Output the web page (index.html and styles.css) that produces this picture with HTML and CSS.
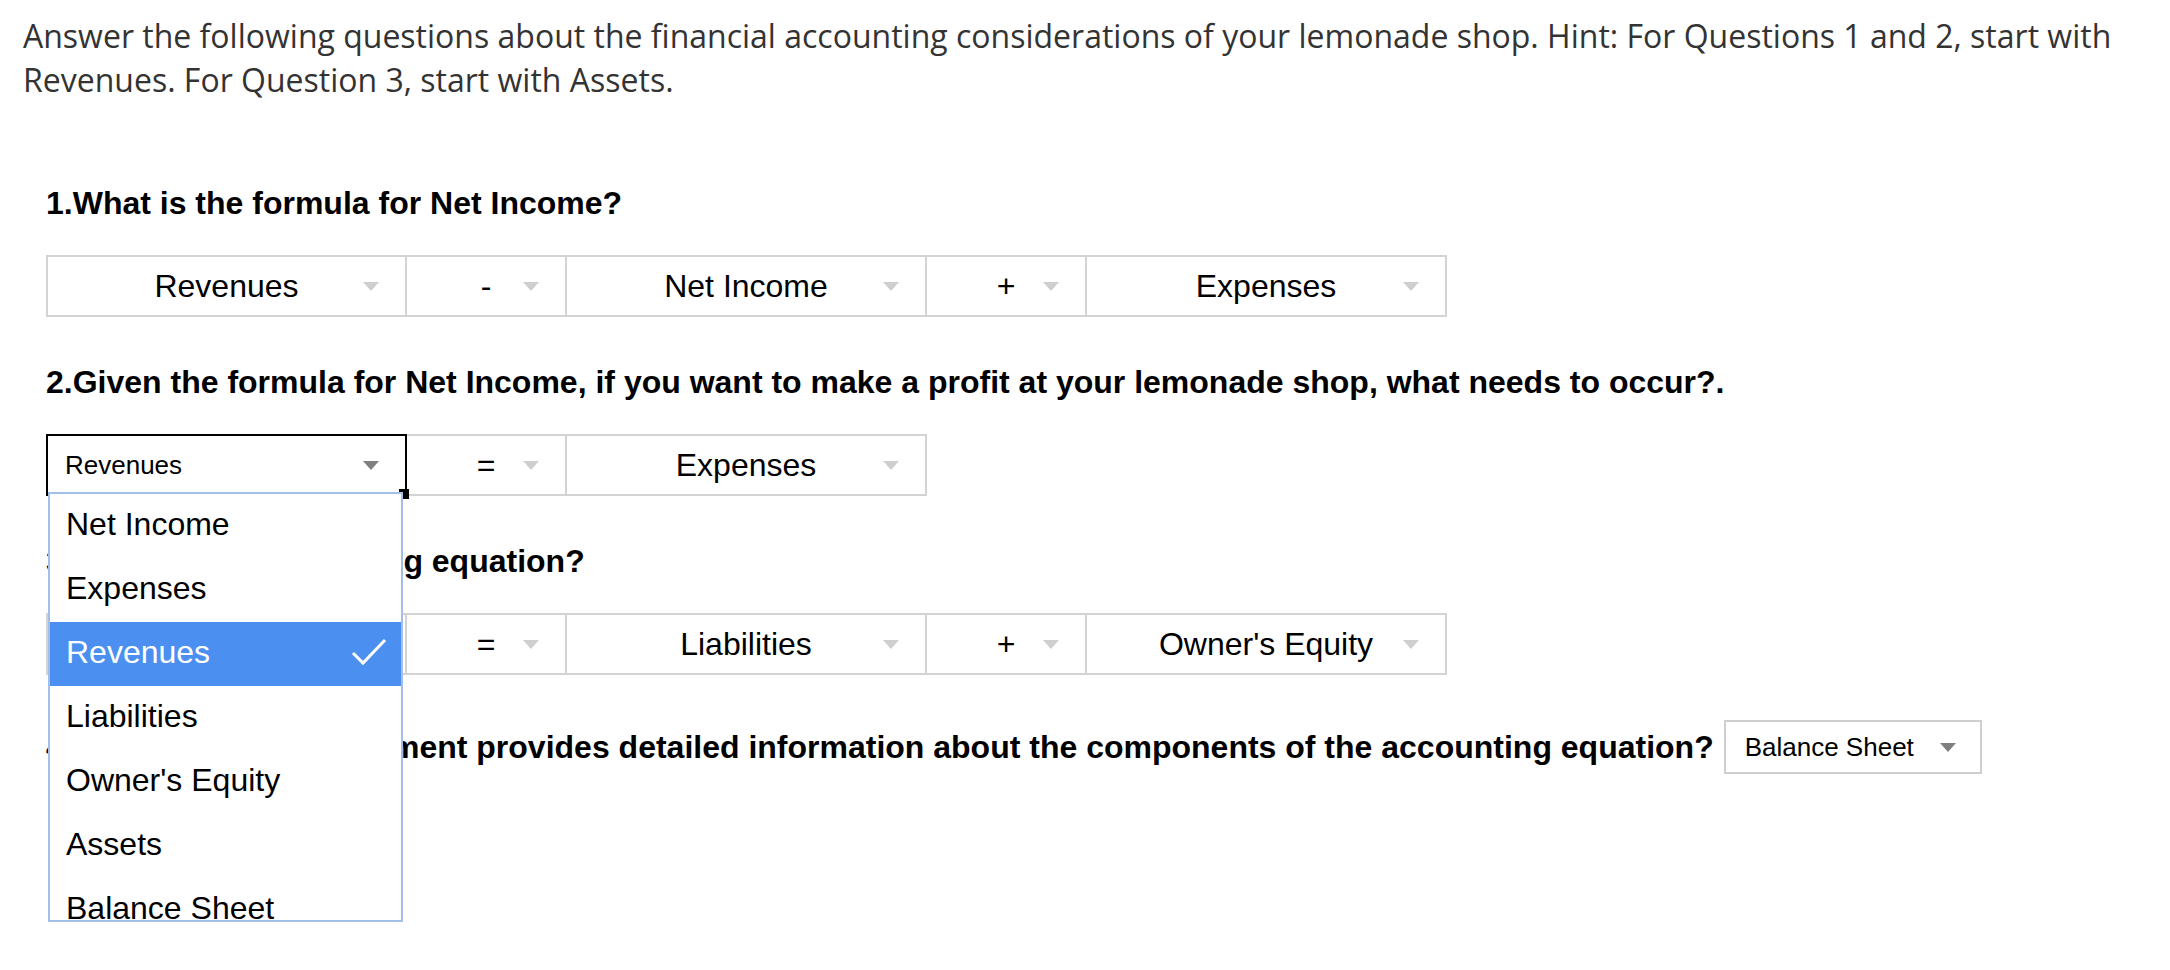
FILE: index.html
```html
<!DOCTYPE html>
<html>
<head>
<meta charset="utf-8">
<title>Lemonade shop accounting</title>
<link rel="stylesheet" href="styles.css">
</head>
<body>
<p class="intro">Answer the following questions about the financial accounting considerations of your lemonade shop. Hint: For Questions 1 and 2, start with Revenues. For Question 3, start with Assets.</p>

<div class="quiz">
  <h2 class="q-title">1.What is the formula for Net Income?</h2>
  <div class="eq">
    <div class="cell wide"><span class="val">Revenues</span><i class="caret"></i></div>
    <div class="cell narrow"><span class="val">-</span><i class="caret"></i></div>
    <div class="cell wide"><span class="val">Net Income</span><i class="caret"></i></div>
    <div class="cell narrow"><span class="val">+</span><i class="caret"></i></div>
    <div class="cell wide"><span class="val">Expenses</span><i class="caret"></i></div>
  </div>

  <h2 class="q-title">2.Given the formula for Net Income, if you want to make a profit at your lemonade shop, what needs to occur?.</h2>
  <div class="eq">
    <div class="cell wide focused"><span class="val">Revenues</span><i class="caret dark"></i><b class="handle"></b>
      <ul class="menu">
        <li>Net Income</li>
        <li>Expenses</li>
        <li class="sel">Revenues<svg class="check" width="36" height="28" viewBox="0 0 36 28"><polyline points="2,15 12,25 34,2" fill="none" stroke="#fff" stroke-width="3"/></svg></li>
        <li>Liabilities</li>
        <li>Owner's Equity</li>
        <li>Assets</li>
        <li>Balance Sheet</li>
      </ul>
    </div>
    <div class="cell narrow"><span class="val">=</span><i class="caret"></i></div>
    <div class="cell wide"><span class="val">Expenses</span><i class="caret"></i></div>
  </div>

  <h2 class="q-title">3.What is the accounting equation?</h2>
  <div class="eq">
    <div class="cell wide"><span class="val">Assets</span><i class="caret"></i></div>
    <div class="cell narrow"><span class="val">=</span><i class="caret"></i></div>
    <div class="cell wide"><span class="val">Liabilities</span><i class="caret"></i></div>
    <div class="cell narrow"><span class="val">+</span><i class="caret"></i></div>
    <div class="cell wide"><span class="val">Owner's Equity</span><i class="caret"></i></div>
  </div>

  <div class="q-line">
    <h2 class="q-title inline">4.Which financial statement provides detailed information about the components of the accounting equation?</h2>
    <div class="picker"><span>Balance Sheet</span><i class="caret dark"></i></div>
  </div>
</div>
</body>
</html>
```
FILE: styles.css
```css
html, body {
  margin: 0;
  padding: 0;
  background: #fff;
}
body {
  min-height: 970px;
  font-family: "Liberation Sans", Arial, sans-serif;
  color: #000;
}
.intro {
  margin: 0;
  padding: 14px 20px 0 23px;
  font-family: "Open Sans", sans-serif;
  font-size: 32px;
  line-height: 44px;
  color: #333;
}
.quiz {
  padding-left: 46px;
  padding-bottom: 200px;
  margin-top: 82px;
}
.q-title {
  margin: 0 0 33px 0;
  font-size: 32px;
  line-height: 38px;
  font-weight: bold;
}
.eq {
  display: flex;
  margin-bottom: 46px;
}
.cell {
  position: relative;
  box-sizing: border-box;
  height: 62px;
  border: 2px solid #d3d3d3;
  margin-left: -2px;
  display: flex;
  align-items: center;
  justify-content: center;
  font-size: 32px;
  background: #fff;
}
.cell:first-child {
  margin-left: 0;
}
.wide { width: 362px; }
.cell.wide:first-child { width: 361px; }
.narrow { width: 162px; }
.caret {
  position: absolute;
  right: 26px;
  top: 50%;
  margin-top: -4px;
  width: 0;
  height: 0;
  border-left: 8.5px solid transparent;
  border-right: 8.5px solid transparent;
  border-top: 9px solid #cfcfcf;
}
.caret.dark {
  border-top-color: #7f7f7f;
}
.cell.focused {
  border-color: #000;
  justify-content: flex-start;
  padding-left: 17px;
  font-size: 26px;
  z-index: 2;
}
.handle {
  position: absolute;
  right: -4px;
  bottom: -5px;
  width: 10px;
  height: 10px;
  background: #000;
}
.menu {
  position: absolute;
  top: calc(100% - 2px);
  left: 0;
  box-sizing: border-box;
  width: 355px;
  height: 430px;
  margin: 0;
  padding: 0;
  list-style: none;
  background: #fff;
  border: 2px solid #a3bfe8;
  overflow: hidden;
  z-index: 3;
}
.menu li {
  position: relative;
  height: 64px;
  line-height: 60px;
  padding-left: 16px;
  font-size: 32px;
  color: #000;
  white-space: nowrap;
}
.menu li.sel {
  background: #4b90f1;
  color: #fff;
}
.check {
  position: absolute;
  right: 14px;
  top: 16px;
}
.q-line {
  display: flex;
  align-items: center;
  margin-top: -1px;
}
.q-title.inline {
  margin: 0;
}
.picker {
  position: relative;
  box-sizing: border-box;
  width: 258px;
  height: 54px;
  margin-left: 10px;
  border: 2px solid #cfcfcf;
  padding-left: 19px;
  display: flex;
  align-items: center;
  font-size: 26px;
}
.picker .caret {
  right: 24px;
}
```
